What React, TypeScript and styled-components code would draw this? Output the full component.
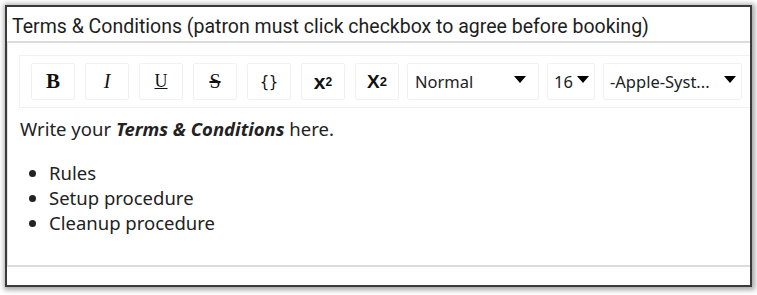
import React from "react";
import styled, { createGlobalStyle } from "styled-components";

const Global = createGlobalStyle`
  html, body { margin: 0; padding: 0; background: #ffffff; }
  * { box-sizing: border-box; }
`;

const Page = styled.div`
  padding: 5px;
  width: 757px;
  height: 295px;
`;

const Frame = styled.div`
  width: 747px;
  height: 282px;
  border: 2px solid #3a3a3a;
  box-shadow: 1px 1px 5px 2px rgba(0, 0, 0, 0.35);
  background: #fff;
  display: flex;
  flex-direction: column;
  overflow: hidden;
`;

const Title = styled.div`
  height: 34px;
  padding: 8px 0 0 5px;
  font-family: Roboto, "Liberation Sans", sans-serif;
  font-size: 19.5px;
  line-height: 23px;
  color: #1d1d1d;
  white-space: nowrap;
`;

const Editor = styled.div`
  height: 226px;
  border-top: 2px solid #dcdcdc;
  border-left: 1px solid #e2e2e2;
  border-bottom: 2px solid #dcdcdc;
  display: flex;
  flex-direction: column;
`;

const Toolbar = styled.div`
  margin: 12px -20px 0 11px;
  padding: 7px 11px 7px 11px;
  border: 1px solid #f1f1f1;
  display: flex;
  gap: 10px;
  align-items: center;
`;

const Btn = styled.div<{ $font?: string }>`
  width: 44px;
  height: 37px;
  border: 1px solid #f1f1f1;
  border-radius: 2px;
  display: flex;
  align-items: center;
  justify-content: center;
  font-family: ${(p) => p.$font || '"Liberation Serif", serif'};
  font-size: 18px;
  color: #111;
`;

const Select = styled.div<{ $w: number }>`
  width: ${(p) => p.$w}px;
  height: 37px;
  border: 1px solid #f1f1f1;
  border-radius: 2px;
  display: flex;
  align-items: center;
  justify-content: space-between;
  padding: 0 12px 0 7px;
  font-family: "Noto Sans", "Open Sans", sans-serif;
  font-size: 16.5px;
  color: #222;
  white-space: nowrap;
  margin-left: -2px;
`;

const Caret = styled.span`
  width: 0;
  height: 0;
  border-left: 6px solid transparent;
  border-right: 6px solid transparent;
  border-top: 7px solid #000;
  margin-top: -4px;
`;

const Content = styled.div`
  padding: 8px 12px 0 12px;
  font-family: "Noto Sans", "Open Sans", sans-serif;
  font-size: 18.5px;
  color: #222;
  line-height: 25px;
`;

const Para = styled.p`
  margin: 0 0 19px 0;
`;

const List = styled.ul`
  margin: 0;
  padding-left: 29px;
  li { line-height: 25px; }
`;

const Sup = styled.span`
  font-size: 12px;
  vertical-align: 8px;
`;
const Sub = styled.span`
  font-size: 13px;
  vertical-align: -4px;
`;

export default function App() {
  return (
    <>
      <Global />
      <Page>
        <Frame>
          <Title>Terms &amp; Conditions (patron must click checkbox to agree before booking)</Title>
          <Editor>
            <Toolbar>
              <Btn><b style={{ fontSize: 21 }}>B</b></Btn>
              <Btn style={{ fontSize: 20 }}><i>I</i></Btn>
              <Btn><u>U</u></Btn>
              <Btn style={{ fontSize: 20 }}><s>S</s></Btn>
              <Btn $font='"DejaVu Sans Mono", monospace' style={{ fontSize: 15 }}>{"{}"}</Btn>
              <Btn $font='"Liberation Sans", sans-serif' style={{ fontSize: 21 }}><b>x</b><Sup><b>2</b></Sup></Btn>
              <Btn $font='"Liberation Sans", sans-serif' style={{ fontSize: 19 }}><b>X</b><Sub><b>2</b></Sub></Btn>
              <Select $w={132}>Normal<Caret /></Select>
              <Select $w={48} style={{ padding: "0 5px 0 6px" }}>16<Caret /></Select>
              <Select $w={139} style={{ padding: "0 5px 0 6px" }}>-Apple-Syst...<Caret /></Select>
            </Toolbar>
            <Content>
              <Para>Write your <b><i>Terms &amp; Conditions</i></b> here.</Para>
              <List>
                <li>Rules</li>
                <li>Setup procedure</li>
                <li>Cleanup procedure</li>
              </List>
            </Content>
          </Editor>
        </Frame>
      </Page>
    </>
  );
}
